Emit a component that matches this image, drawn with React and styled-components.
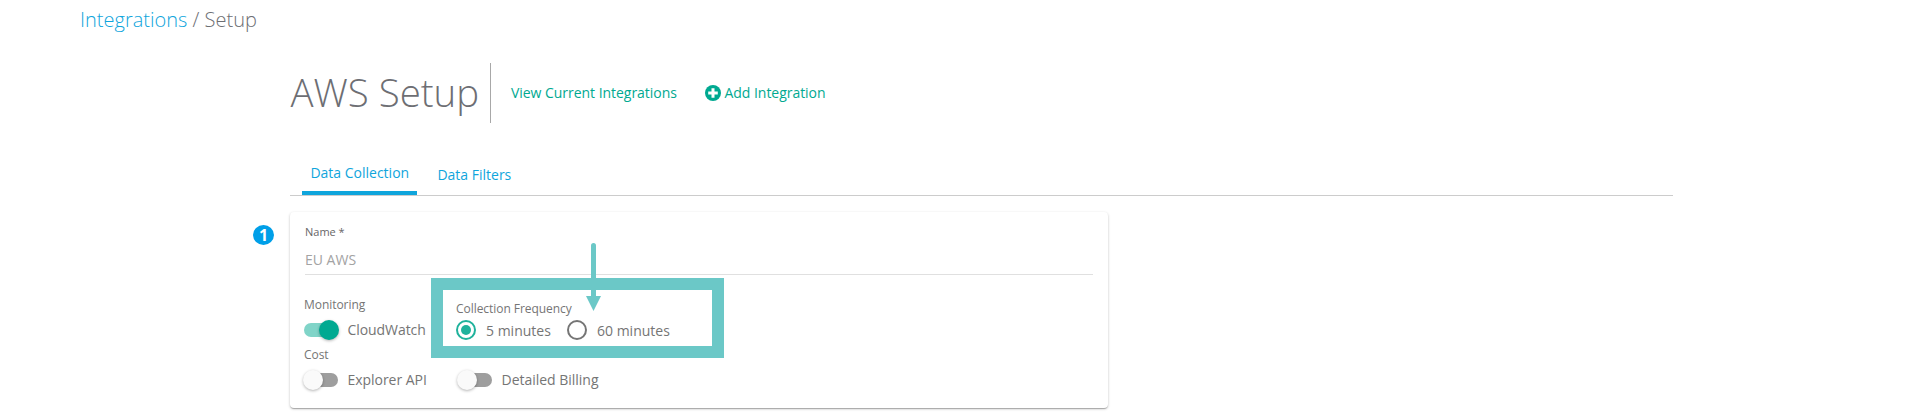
import React from "react";
import styled, { createGlobalStyle } from "styled-components";

const Global = createGlobalStyle`
  *, *::before, *::after { box-sizing: border-box; }
  body {
    margin: 0;
    background: #fff;
    color: #757575;
    font: 400 14px/20px "Open Sans", "Noto Sans", sans-serif;
    overflow: hidden;
  }
`;

const teal = "#00a991";
const blue = "#0fa5dc";
const mark = "#6bc8c7";

const Page = styled.div`
  position: relative;
  height: 416px;
`;

const Breadcrumb = styled.nav`
  padding: 6px 0 0 80px;
  height: 63px;
  font-size: 20px;
  font-weight: 300;
  line-height: 28px;
  color: #6d6e73;
  a { color: ${blue}; text-decoration: none; }
`;

const Header = styled.header`
  display: flex;
  align-items: center;
  height: 60px;
  margin-left: 290px;
`;

const Title = styled.h1`
  width: 200px;
  height: 60px;
  margin: 0;
  padding-left: 0.5px;
  font-size: 38.4px;
  font-weight: 300;
  line-height: 58px;
  white-space: nowrap;
  color: #6d6e73;
`;

const Divider = styled.span`
  width: 1px;
  height: 60px;
  background: #a8a8a8;
`;

const HeaderLink = styled.a`
  display: flex;
  align-items: center;
  gap: 4px;
  margin-left: ${(p) => p.$offset}px;
  width: ${(p) => p.$width}px;
  white-space: nowrap;
  letter-spacing: -0.04px;
  color: ${teal};
`;

const Tabs = styled.div`
  display: flex;
  width: 1383px;
  height: 37px;
  margin: 36px 0 0 290px;
  padding-left: 12px;
  border-bottom: 1px solid #ccc;
`;

const Tab = styled.a`
  height: ${(p) => (p.$active ? 36 : 32)}px;
  margin-top: ${(p) => (p.$active ? 0 : 2)}px;
  width: ${(p) => (p.$active ? 115 : 110)}px;
  padding: 4px 0 0 ${(p) => (p.$active ? 8.4 : 20.4)}px;
  border-bottom: ${(p) => (p.$active ? `4px solid ${blue}` : "none")};
  white-space: nowrap;
  color: ${blue};
`;

const Step = styled.section`
  display: flex;
  align-items: flex-start;
  margin: 16px 0 0 253px;
`;

const StepBadge = styled.span`
  width: 21px;
  height: 20px;
  margin: 13px 16px 0 0;
  border-radius: 50%;
  background: #009fe8;
  color: #fff;
  font-size: 16px;
  font-weight: 700;
  line-height: 20px;
  text-align: center;
`;

const Card = styled.div`
  width: 818px;
  height: 196px;
  padding: 12px 15px 0 14px;
  border-radius: 4px;
  background: #fff;
  box-shadow: 0 1px 3px 0 rgba(0, 0, 0, 0.2), 0 1px 1px 0 rgba(0, 0, 0, 0.14),
    0 2px 1px -1px rgba(0, 0, 0, 0.12);
`;

const Field = styled.label`
  display: block;
  height: 51px;
  margin-left: 1px;
  border-bottom: 1px solid #e0e0e0;
`;

const FieldLabel = styled.span`
  display: block;
  font-size: 11px;
  line-height: 16px;
  color: #666;
`;

const FieldValue = styled.span`
  display: block;
  margin-top: 10px;
  line-height: 20px;
  color: #a3a3a3;
`;

const Options = styled.div`
  display: grid;
  grid-template-columns: 152px 1fr;
  padding-top: 19px;
`;

const Cell = styled.div`
  height: 50px;
  padding-top: ${(p) => p.$top || 0}px;
  padding-left: ${(p) => p.$indent || 0}px;
`;

const Caption = styled.div`
  height: 16px;
  font-size: 12px;
  line-height: 16px;
  letter-spacing: -0.05px;
  white-space: nowrap;
`;

const Control = styled.div`
  display: flex;
  align-items: center;
  height: 20px;
  margin-top: ${(p) => p.$gap || 0}px;
  white-space: nowrap;
`;

const Track = styled.span`
  display: flex;
  align-items: center;
  width: 34px;
  height: 14px;
  margin-right: 9.5px;
  border-radius: 7px;
  background: ${(p) => (p.$on ? "#80d4c8" : "#9e9e9e")};
`;

const Thumb = styled.span`
  flex: none;
  width: 20px;
  height: 20px;
  margin-left: ${(p) => (p.$on ? 15 : -1)}px;
  border-radius: 50%;
  background: ${(p) => (p.$on ? teal : "#fafafa")};
  box-shadow: 0 1px 3px rgba(0, 0, 0, 0.3);
`;

const Radio = styled.span`
  display: grid;
  place-items: center;
  width: 20px;
  height: 20px;
  margin-right: 10px;
  border: 2px solid ${(p) => (p.$checked ? "#1fb29c" : "#757575")};
  border-radius: 50%;
  &::after {
    content: "";
    width: 10px;
    height: 10px;
    border-radius: 50%;
    background: ${(p) => (p.$checked ? "#1fb29c" : "transparent")};
  }
`;

const Text = styled.span`
  width: ${(p) => (p.$width ? `${p.$width}px` : "auto")};
  padding-top: ${(p) => p.$drop || 0}px;
  letter-spacing: ${(p) => p.$tracking || 0}px;
`;

const Highlight = styled.div`
  position: absolute;
  left: 431px;
  top: 278px;
  width: 293px;
  height: 80px;
  border: 12px solid ${mark};
`;

const Pointer = styled.svg`
  position: absolute;
  left: 586px;
  top: 243px;
`;

function Toggle({ on }) {
  return (
    <Track $on={on}>
      <Thumb $on={on} />
    </Track>
  );
}

function PlusIcon() {
  return (
    <svg width="16" height="16" viewBox="0 0 16 16">
      <circle cx="8" cy="8" r="8" fill={teal} />
      <path d="M8 3.2v9.6M3.2 8h9.6" stroke="#fff" strokeWidth="3" />
    </svg>
  );
}

export default function App() {
  return (
    <Page>
      <Global />
      <Breadcrumb>
        <a>Integrations</a> / Setup
      </Breadcrumb>
      <Header>
        <Title>AWS Setup</Title>
        <Divider />
        <HeaderLink $offset={20} $width={193.5}>View Current Integrations</HeaderLink>
        <HeaderLink $offset={0} $width={130}>
          <PlusIcon />
          Add Integration
        </HeaderLink>
      </Header>
      <Tabs>
        <Tab $active>Data Collection</Tab>
        <Tab>Data Filters</Tab>
      </Tabs>
      <Step>
        <StepBadge>1</StepBadge>
        <Card>
          <Field>
            <FieldLabel>Name *</FieldLabel>
            <FieldValue>EU AWS</FieldValue>
          </Field>
          <Options>
            <Cell $top={3}>
              <Caption>Monitoring</Caption>
              <Control $gap={7}>
                <Toggle on />
                <Text $tracking={-0.07}>CloudWatch</Text>
              </Control>
            </Cell>
            <Cell $top={7}>
              <Caption>Collection Frequency</Caption>
              <Control $gap={3}>
                <Radio $checked />
                <Text $width={81} $drop={2}>5 minutes</Text>
                <Radio />
                <Text $drop={2}>60 minutes</Text>
              </Control>
            </Cell>
            <Cell $top={3}>
              <Caption>Cost</Caption>
              <Control $gap={7}>
                <Toggle />
                <Text $tracking={-0.04}>Explorer API</Text>
              </Control>
            </Cell>
            <Cell $top={26} $indent={2}>
              <Control>
                <Toggle />
                <Text $tracking={-0.02}>Detailed Billing</Text>
              </Control>
            </Cell>
          </Options>
        </Card>
      </Step>
      <Highlight />
      <Pointer width="15" height="68" viewBox="0 0 15 68">
        <path d="M7.5 2.5V56" stroke={mark} strokeWidth="5" strokeLinecap="round" />
        <path d="M0 53h15L7.5 68z" fill={mark} />
      </Pointer>
    </Page>
  );
}
